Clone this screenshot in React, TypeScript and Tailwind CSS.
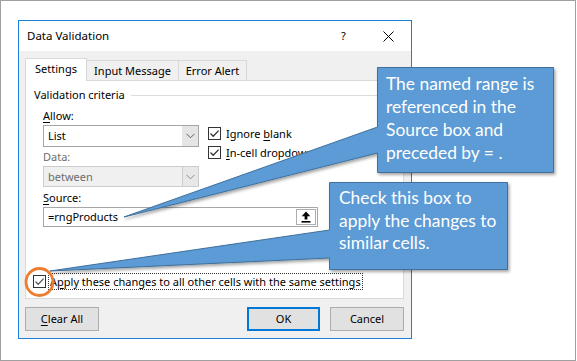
import React from "react";

function Check({ gray = false }: { gray?: boolean }) {
  return (
    <div className="w-[13px] h-[13px] border border-[#333333] bg-white flex items-center justify-center shrink-0">
      <svg width="11" height="11" viewBox="0 0 11 11">
        <path d="M1.5 5.5 L4.2 8.2 L9.6 2.6" fill="none" stroke={gray ? "#5a5a5a" : "#333333"} strokeWidth="1.3" />
      </svg>
    </div>
  );
}

function Chevron({ color = "#606060" }: { color?: string }) {
  return (
    <svg width="9" height="6" viewBox="0 0 9 6">
      <path d="M0.5 0.8 L4.5 4.8 L8.5 0.8" fill="none" stroke={color} strokeWidth="1" />
    </svg>
  );
}

export default function App() {
  return (
    <div className="relative w-[576px] h-[361px] bg-white border border-[#a0a0a0] font-['Noto_Sans',sans-serif] text-[11px] text-black overflow-hidden">
      {/* Dialog */}
      <div className="ml-[17px] mt-[19px] w-[394px] h-[319px] border border-[#1b7fd6] flex flex-col">
        <div className="h-[30px] bg-white flex items-center pl-[8px] relative shrink-0">
          <span className="leading-[16px] text-[11.5px]">Data Validation</span>
          <span className="absolute left-[322px] top-[7px] leading-[16px]">?</span>
          <svg className="absolute left-[364px] top-[10px]" width="11" height="11" viewBox="0 0 11 11">
            <path d="M0.5 0.5 L10.5 10.5 M10.5 0.5 L0.5 10.5" stroke="#000" strokeWidth="1" />
          </svg>
        </div>
        <div className="flex-1 bg-[#f0f0f0] pt-[7px] pl-[6px] pr-[7px] pb-[7px] flex flex-col">
          {/* Tabs */}
          <div className="h-[22px] flex items-end shrink-0">
            <div className="relative z-10 w-[62px] h-[23px] mb-[-1px] bg-white border-l border-t border-r border-[#d9d9d9] flex items-center justify-center leading-[16px] pb-[2px]">
              Settings
            </div>
            <div className="w-[92px] h-[20px] border-t border-r border-[#d9d9d9] flex items-center justify-center leading-[16px]">
              Input Message
            </div>
            <div className="w-[68px] h-[20px] border-t border-r border-[#d9d9d9] flex items-center justify-center leading-[16px]">
              Error Alert
            </div>
          </div>
          {/* Panel */}
          <div className="h-[219px] bg-white border border-[#d9d9d9] flex flex-col pt-[6px] pb-[8px] shrink-0">
            <div className="h-[16px] pl-[8px] flex items-center">
              <span className="leading-[16px]">Validation criteria</span>
              <div className="flex-1 h-px bg-[#dcdcdc] ml-[6px] mr-[4px]" />
            </div>
            <div className="pl-[17px] mt-[5px] flex">
              <div className="w-[156px] flex flex-col">
                <div className="h-[16px] leading-[16px]">
                  <span className="underline underline-offset-2">A</span>llow:
                </div>
                <div className="h-[22px] mt-[1px] border border-[#a6a6a6] bg-white flex">
                  <div className="flex-1 pl-[4px] flex items-center leading-[16px]">List</div>
                  <div className="w-[16px] bg-[#e5e5e5] flex items-center justify-center">
                    <Chevron />
                  </div>
                </div>
                <div className="h-[16px] mt-[2px] leading-[16px] text-[#6d6d6d]">Data:</div>
                <div className="h-[21px] mt-[1px] border border-[#cccccc] bg-[#f0f0f0] flex">
                  <div className="flex-1 pl-[4px] flex items-center leading-[16px] text-[#6d6d6d]">between</div>
                  <div className="w-[16px] border-l border-[#cccccc] bg-[#e8e8e8] flex items-center justify-center">
                    <Chevron color="#8a8a8a" />
                  </div>
                </div>
              </div>
              <div className="ml-[9px] pt-[19px] flex flex-col gap-[6px]">
                <div className="flex items-center h-[13px]">
                  <Check />
                  <span className="ml-[5px] leading-[13px]">
                    Ignore <span className="underline underline-offset-2">b</span>lank
                  </span>
                </div>
                <div className="flex items-center h-[13px]">
                  <Check />
                  <span className="ml-[5px] leading-[13px]">
                    <span className="underline underline-offset-2">I</span>n-cell dropdown
                  </span>
                </div>
              </div>
            </div>
            <div className="pl-[17px] h-[16px] mt-[3px] leading-[16px]">
              <span className="underline underline-offset-2">S</span>ource:
            </div>
            <div className="ml-[17px] mt-[1px] w-[275px] h-[20px] border border-[#a6a6a6] bg-white flex items-center">
              <div className="flex-1 pl-[4px] leading-[16px]">=rngProducts</div>
              <div className="w-[20px] h-[16px] mr-[1px] border border-[#adadad] bg-white flex items-center justify-center">
                <svg width="10" height="12" viewBox="0 0 10 12">
                  <path d="M5 0.5 L9.3 5.2 H6.4 V8.6 H3.6 V5.2 H0.7 Z" fill="#000" />
                  <rect x="0.5" y="10" width="9" height="1.6" fill="#000" />
                </svg>
              </div>
            </div>
            <div className="mt-auto pl-[7px] flex items-center h-[17px]">
              <Check gray />
              <span className="ml-[2px] h-[17px] px-[1px] border border-dotted border-[#333] leading-[15px]">
                A<span className="underline underline-offset-2">p</span>ply these changes to all other cells with the same settings
              </span>
            </div>
          </div>
          {/* Buttons */}
          <div className="mt-[8px] h-[24px] flex shrink-0">
            <div className="w-[74px] h-[24px] bg-[#e1e1e1] border border-[#adadad] flex items-center justify-center leading-[16px]">
              <span className="underline underline-offset-2">C</span>lear All
            </div>
            <div className="ml-auto w-[73px] h-[24px] bg-[#e1e1e1] border-2 border-[#0078d7] flex items-center justify-center leading-[16px]">
              OK
            </div>
            <div className="ml-[10px] w-[74px] h-[24px] bg-[#e1e1e1] border border-[#adadad] flex items-center justify-center leading-[16px]">
              Cancel
            </div>
          </div>
        </div>
      </div>

      {/* Callout shapes overlay */}
      <svg className="absolute left-[-1px] top-[-1px] pointer-events-none" width="577" height="361" viewBox="0 0 577 361">
        <defs>
          <filter id="sh" x="-10%" y="-10%" width="130%" height="140%">
            <feDropShadow dx="1.5" dy="2" stdDeviation="1.5" floodColor="#000" floodOpacity="0.35" />
          </filter>
        </defs>
        <path
          d="M377.5 67.5 H553.5 V172.5 H377.5 V153 L124 217 L377.5 127 Z"
          fill="#5b9bd5"
          stroke="#41719c"
          strokeWidth="1"
          filter="url(#sh)"
        />
        <path
          d="M329.5 182.5 H507.5 V269.5 H329.5 V258 L50 271 L329.5 230 Z"
          fill="#5b9bd5"
          stroke="#41719c"
          strokeWidth="1"
          filter="url(#sh)"
        />
        <circle cx="39.5" cy="282" r="13.5" fill="none" stroke="#ed7d31" strokeWidth="2.8" />
      </svg>

      {/* Callout texts */}
      <div className="absolute left-[385px] top-[71px] text-white font-['Lato',sans-serif] text-[17.4px] leading-[23px]">
        <div>The named range is</div>
        <div>referenced in the</div>
        <div>Source box and</div>
        <div>preceded by = .</div>
      </div>
      <div className="absolute left-[338px] top-[186px] text-white font-['Lato',sans-serif] text-[17.4px] leading-[22.5px]">
        <div>Check this box to</div>
        <div>apply the changes to</div>
        <div>similar cells.</div>
      </div>
    </div>
  );
}
